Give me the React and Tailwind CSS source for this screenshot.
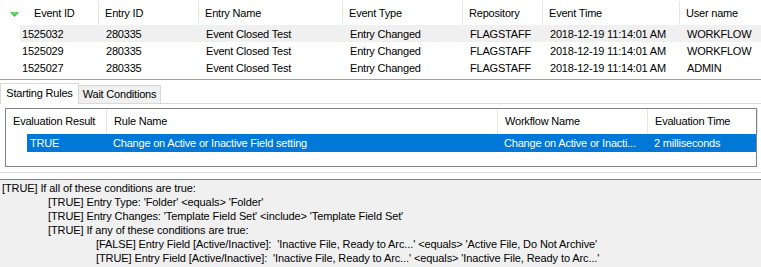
import React from "react";

const topCols = [
  { w: 99, label: "Event ID", pl: 34 },
  { w: 100, label: "Entry ID", pl: 6 },
  { w: 144, label: "Entry Name", pl: 6 },
  { w: 120, label: "Event Type", pl: 6 },
  { w: 80, label: "Repository", pl: 6 },
  { w: 137, label: "Event Time", pl: 6 },
  { w: 81, label: "User name", pl: 6 },
];

const rows = [
  ["1525032", "280335", "Event Closed Test", "Entry Changed", "FLAGSTAFF", "2018-12-19 11:14:01 AM", "WORKFLOW"],
  ["1525029", "280335", "Event Closed Test", "Entry Changed", "FLAGSTAFF", "2018-12-19 11:14:01 AM", "WORKFLOW"],
  ["1525027", "280335", "Event Closed Test", "Entry Changed", "FLAGSTAFF", "2018-12-19 11:14:01 AM", "ADMIN"],
];

const ruleCols = [
  { w: 101, label: "Evaluation Result" },
  { w: 391, label: "Rule Name" },
  { w: 150, label: "Workflow Name" },
  { w: 110, label: "Evaluation Time" },
];

export default function App() {
  return (
    <div
      className="w-[761px] h-[267px] bg-white overflow-hidden flex flex-col text-[11px] tracking-[-0.2px] text-black"
      style={{ fontFamily: '"Liberation Sans", Arial, sans-serif' }}
    >
      {/* Top grid */}
      <div className="h-[80px] shrink-0 border-b border-[#a0a0a0] flex flex-col">
        <div className="h-[25px] flex pt-[1px]">
          {topCols.map((c, i) => (
            <div
              key={i}
              className="relative flex items-center border-r border-[#e5e5e5] shrink-0 last:border-r-0"
              style={{ width: c.w, paddingLeft: c.pl }}
            >
              {i === 0 && (
                <svg className="absolute left-[10px] top-[11px]" width="9" height="5" viewBox="0 0 9 5">
                  <polygon points="0,0 9,0 4.5,5" fill="#3fb63f" />
                  <polygon points="1,0 8,0 4.5,3" fill="#6fdc6f" />
                </svg>
              )}
              {c.label}
            </div>
          ))}
        </div>
        {rows.map((r, ri) => (
          <div key={ri} className="h-[17px] flex">
            <div className={`ml-[20px] flex ${ri === 0 ? "bg-[#f0f0f0]" : ""}`}>
              {r.map((cell, ci) => (
                <div
                  key={ci}
                  className="flex items-center shrink-0 pt-[1px]"
                  style={{ width: ci === 0 ? 79 : topCols[ci].w, paddingLeft: ci === 0 ? 2 : 7 }}
                >
                  {cell}
                </div>
              ))}
            </div>
          </div>
        ))}
      </div>

      {/* Tabs section */}
      <div className="h-[99px] shrink-0 flex flex-col">
        <div className="h-[24px] flex items-end border-b border-[#d9d9d9] pt-[4px]">
          <div className="h-[21px] w-[79px] bg-white border border-b-0 border-[#d9d9d9] flex items-center justify-center mb-[-1px] relative z-10 pb-[2px]">
            Starting Rules
          </div>
          <div className="h-[18px] w-[82px] bg-[#f0f0f0] border border-l-0 border-b-0 border-[#d9d9d9] flex items-center justify-center">
            Wait Conditions
          </div>
        </div>
        <div className="h-[69px] border-b border-[#d9d9d9] px-[5px] pt-[4px] pb-[5px]">
          <div className="h-full w-[752px] border border-[#828282] flex flex-col">
            <div className="h-[25px] flex">
              {ruleCols.map((c, i) => (
                <div
                  key={i}
                  className="flex items-center pl-[7px] border-r border-[#e5e5e5] shrink-0"
                  style={{ width: c.w }}
                >
                  {c.label}
                </div>
              ))}
            </div>
            <div className="h-[18px] flex">
              <div className="ml-[21px] flex-1 bg-[#0078d7] text-white flex">
                <div className="w-[80px] pl-[3px] flex items-center shrink-0">TRUE</div>
                <div className="w-[391px] pl-[6px] flex items-center shrink-0">Change on Active or Inactive Field setting</div>
                <div className="w-[150px] pl-[6px] flex items-center shrink-0">Change on Active or Inacti...</div>
                <div className="w-[105px] pl-[6px] flex items-center shrink-0">2 milliseconds</div>
              </div>
            </div>
          </div>
        </div>
        <div className="flex-1" />
      </div>

      {/* Bottom text */}
      <div className="flex-1 bg-[#f0f0f0] border-t border-[#828282] pt-[1px] pl-[2px] leading-[14px] tracking-[-0.1px]">
        <div>[TRUE] If all of these conditions are true:</div>
        <div className="pl-[46px]">[TRUE] Entry Type: 'Folder' &lt;equals&gt; 'Folder'</div>
        <div className="pl-[46px]">[TRUE] Entry Changes: 'Template Field Set' &lt;include&gt; 'Template Field Set'</div>
        <div className="pl-[46px]">[TRUE] If any of these conditions are true:</div>
        <div className="pl-[94px] whitespace-pre">[FALSE] Entry Field [Active/Inactive]:  'Inactive File, Ready to Arc...' &lt;equals&gt; 'Active File, Do Not Archive'</div>
        <div className="pl-[94px] whitespace-pre">[TRUE] Entry Field [Active/Inactive]:  'Inactive File, Ready to Arc...' &lt;equals&gt; 'Inactive File, Ready to Arc...'</div>
      </div>
    </div>
  );
}
